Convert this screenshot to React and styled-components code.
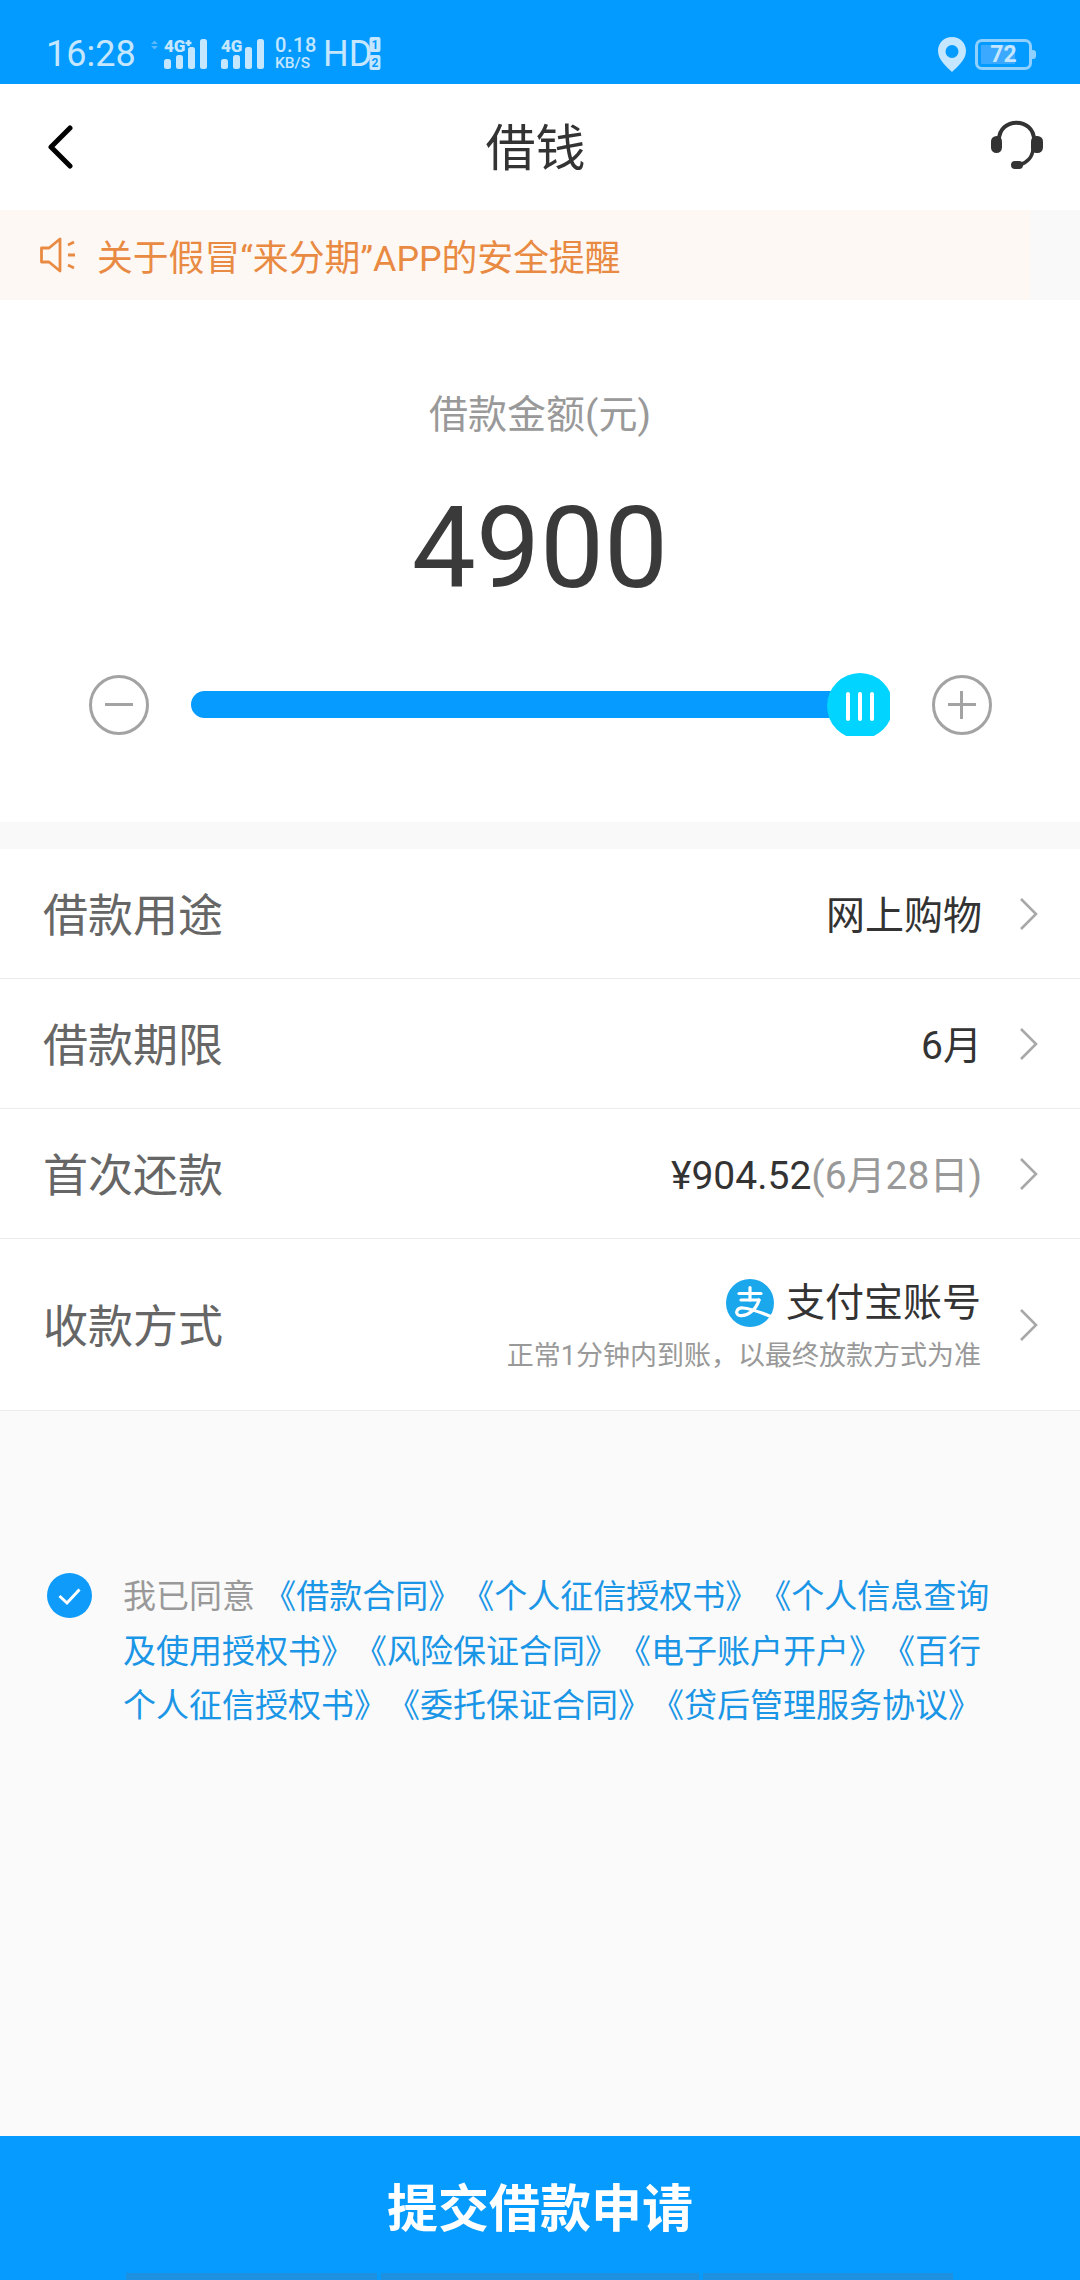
import React from 'react'
import styled, { createGlobalStyle } from 'styled-components'

const GlobalStyle = createGlobalStyle`
html, body {
  margin: 0;
  padding: 0;
  background: #fafafa;
}
* {
  box-sizing: border-box;
}
`
const Page = styled.div`
width: 1080px;
height: 2280px;
display: flex;
flex-direction: column;
overflow: hidden;
background: #fafafa;
font-family: Roboto, "Noto Sans CJK SC", sans-serif;
color: #333;
`
const StatusBar = styled.div`
height: 84px;
flex-shrink: 0;
display: flex;
align-items: center;
padding: 24px 45px 0 46px;
background: #039bff;
color: #c4e6ff;
`
const Time = styled.span`
width: 104px;
font-size: 36px;
line-height: 42px;
`
const StatusIcon = styled.svg`
display: block;
flex-shrink: 0;
margin-right: ${p => p.$gap || 0}px;
`
const Speed = styled.div`
width: 48px;
display: flex;
flex-direction: column;
font-weight: 500;
line-height: 16px;
`
const SpeedValue = styled.span`
font-size: 20px;
letter-spacing: 0.6px;
`
const SpeedUnit = styled.span`
font-size: 15.5px;
margin-top: 2px;
`
const Hd = styled.span`
font-size: 36px;
line-height: 42px;
width: 46px;
`
const Spacer = styled.div`
flex: 1;
`
const Battery = styled.div`
position: relative;
width: 57px;
height: 31px;
margin-right: 3px;
border: 3px solid #8fd0ff;
border-radius: 7px;
display: flex;
align-items: center;
justify-content: center;
font-size: 23px;
font-weight: 700;
background: linear-gradient(90deg, #3aa9ff 72%, transparent 72%);
background-clip: content-box;
padding: 3px;

&::after {
  content: '';
  position: absolute;
  right: -7px;
  top: 8px;
  width: 4px;
  height: 9px;
  border-radius: 0 3px 3px 0;
  background: #8fd0ff;
}
`
const NavBar = styled.div`
height: 126px;
flex-shrink: 0;
display: grid;
grid-template-columns: 1fr auto 1fr;
align-items: center;
padding: 0 37px 0 47px;
background: #fff;
`
const Title = styled.h1`
margin: 3px 19px 0 0;
font-size: 50px;
font-weight: 400;
line-height: 60px;
color: #333;
`
const HeadsetWrap = styled.div`
justify-self: end;
`
const Notice = styled.div`
height: 90px;
flex-shrink: 0;
display: flex;
align-items: center;
padding-left: 40px;
background: #fef8f4;
color: #e98a43;
font-size: 35.8px;
`
const NoticeText = styled.span`
margin-left: 21px;
`
const NoticeEnd = styled.div`
margin-left: auto;
width: 50px;
height: 100%;
background: #f9f9f9;
`
const AmountSection = styled.section`
height: 522px;
flex-shrink: 0;
display: flex;
flex-direction: column;
align-items: center;
padding-top: 91px;
background: #fff;
`
const AmountLabel = styled.div`
font-size: 39px;
line-height: 48px;
color: #999;
`
const Amount = styled.div`
margin-top: 44px;
font-size: 114px;
line-height: 130px;
color: #3a3a3a;
`
const SliderRow = styled.div`
margin-top: 60px;
width: 100%;
display: flex;
align-items: center;
padding-left: 89px;
`
const RoundButton = styled.div`
position: relative;
width: 60px;
height: 60px;
flex-shrink: 0;
border: 3px solid #a3a3a3;
border-radius: 50%;

&::before {
  content: '';
  position: absolute;
  left: 13px;
  right: 13px;
  top: 25px;
  height: 3px;
  background: #a3a3a3;
}

&::after {
  content: '';
  display: ${p => (p.$plus ? 'block' : 'none')};
  position: absolute;
  top: 13px;
  bottom: 13px;
  left: 25px;
  width: 3px;
  background: #a3a3a3;
}
`
const Track = styled.div`
position: relative;
width: 699px;
height: 63px;
margin: 0 42px;
display: flex;
align-items: center;
`
const TrackFill = styled.div`
width: 641px;
height: 27px;
border-radius: 14px 0 0 14px;
background: #059bff;
`
const Thumb = styled.div`
position: absolute;
right: 0;
top: 0;
width: 63px;
height: 63px;
overflow: hidden;
`
const ThumbFace = styled.div`
width: 66px;
height: 66px;
border-radius: 50%;
background: #00d4ff;
display: flex;
align-items: center;
justify-content: center;
gap: 8px;
`
const ThumbLine = styled.span`
width: 4px;
height: 29px;
border-radius: 2px;
background: #fff;
`
const Gap = styled.div`
height: 27px;
flex-shrink: 0;
background: #f9f9f9;
`
const Row = styled.div`
height: ${p => p.$height || 130}px;
flex-shrink: 0;
display: flex;
align-items: center;
padding: 0 41px 3px 43px;
background: #fff;
border-bottom: 1px solid #ececec;
`
const RowLabel = styled.span`
font-size: 45px;
color: #666;
`
const RowValue = styled.span`
margin-left: auto;
margin-right: -2px;
font-size: 39px;
color: #333;
`
const Muted = styled.span`
color: #999;
`
const RowChevron = styled.svg`
display: block;
flex-shrink: 0;
margin: 3px 0 0 39px;
`
const PayColumn = styled.div`
margin: 5px -1px 0 auto;
display: flex;
flex-direction: column;
align-items: flex-end;
`
const PayMethod = styled.div`
display: flex;
align-items: center;
gap: 12px;
font-size: 39px;
line-height: 50px;
color: #333;
`
const PayHint = styled.div`
margin-top: 10px;
font-size: 27px;
line-height: 36px;
color: #999;
`
const Agreement = styled.div`
padding: 159px 0 0 47px;
display: flex;
`
const CheckMark = styled.svg`
display: block;
flex-shrink: 0;
margin: 3px 31px 0 0;
`
const AgreementText = styled.div`
font-size: 33px;
line-height: 54.5px;
color: #1b96e6;
text-spacing-trim: space-all;
`
const AgreementLine = styled.div`
white-space: nowrap;
`
const Footer = styled.div`
position: relative;
margin-top: auto;
height: 144px;
flex-shrink: 0;
display: flex;
align-items: center;
justify-content: center;
padding-bottom: 6px;
background: #069cff;
color: #fff;
font-size: 51px;
font-weight: 700;
`
const NavStrip = styled.div`
position: absolute;
left: 126px;
bottom: 0;
display: flex;
gap: 4px;
`
const NavStripPart = styled.span`
width: ${p => p.$width}px;
height: 7px;
background: #1e90e0;
`

function Signal ({ plus, arrows }) {
  const x = arrows ? 14 : 0
  const w = arrows ? 60 : 44
  const tops = [20, 16, 8, 0]
  return (
    <StatusIcon width={w} height='41' viewBox={`0 -5 ${w} 41`} $gap={arrows ? 11 : 10}>
      {arrows && <path d='M1 5 L4.5 1.5 L8 5 Z M1 7 L4.5 10.5 L8 7 Z' fill='#5cb8ff' />}
      <text x={x} y='12.5' fontFamily='Roboto' fontSize='17' fontWeight='900' fill='#c4e6ff'>4G</text>
      {plus && <path d={`M${x + 21.5} 4 h6 M${x + 24.5} 1 v6`} stroke='#c4e6ff' strokeWidth='2.4' />}
      {tops.map((top, i) => (
        <rect key={i} x={x + i * 12} y={top} width='7' height={30 - top} rx='2.5' fill='#c4e6ff' />
      ))}
    </StatusIcon>
  )
}

function Sim () {
  return (
    <StatusIcon width='12' height='34' viewBox='0 0 12 34'>
      <rect x='0.5' y='0' width='11' height='15' rx='2' fill='#c4e6ff' />
      <text x='6' y='12' textAnchor='middle' fontFamily='Roboto' fontSize='12' fontWeight='700' fill='#039bff'>1</text>
      <rect x='0.5' y='18' width='11' height='15' rx='2' fill='#c4e6ff' />
      <text x='6' y='30' textAnchor='middle' fontFamily='Roboto' fontSize='12' fontWeight='700' fill='#039bff'>2</text>
    </StatusIcon>
  )
}

function Chevron () {
  return (
    <RowChevron width='20' height='34' viewBox='0 0 20 34' fill='none'>
      <path d='M2 2 L17 17 L2 32' stroke='#a8a8a8' strokeWidth='2.6' />
    </RowChevron>
  )
}

function AlipayLogo () {
  return (
    <svg width='48' height='48' viewBox='0 0 48 48' fill='none'>
      <circle cx='24' cy='24' r='24' fill='#1aa7ec' />
      <g stroke='#fff' strokeWidth='3.2' strokeLinecap='round'>
        <path d='M13 14.5 H35' />
        <path d='M24 8.5 V21' />
        <path d='M15 21 H33' />
        <path d='M33 21 C30 31 21 38 13.5 36.5 C8.5 35 10.5 28.5 17 29 C24 29.5 34 33 46 38' />
      </g>
    </svg>
  )
}

function App () {
  return (
    <Page>
      <GlobalStyle />
      <StatusBar>
        <Time>16:28</Time>
        <Signal plus arrows />
        <Signal />
        <Speed>
          <SpeedValue>0.18</SpeedValue>
          <SpeedUnit>KB/S</SpeedUnit>
        </Speed>
        <Hd>HD</Hd>
        <Sim />
        <Spacer />
        <StatusIcon width='28' height='35' viewBox='0 0 28 35' $gap={9}>
          <path
            fillRule='evenodd'
            d='M14 0 C6 0 0 6 0 14 C0 23 9 30 14 35 C19 30 28 23 28 14 C28 6 22 0 14 0 Z M14 8 A6.5 6.5 0 1 1 14 21 A6.5 6.5 0 1 1 14 8 Z'
            fill='#c4e6ff'
          />
        </StatusIcon>
        <Battery>72</Battery>
      </StatusBar>

      <NavBar>
        <svg width='26' height='44' viewBox='0 0 26 44' fill='none'>
          <path d='M23 3 L4 22 L23 41' stroke='#000' strokeWidth='5' strokeLinecap='round' strokeLinejoin='round' />
        </svg>
        <Title>借钱</Title>
        <HeadsetWrap>
          <svg width='52' height='50' viewBox='0 0 52 50' fill='none'>
            <path d='M8 20 C8 -3 43 -3 43 20' stroke='#333' strokeWidth='4' />
            <path d='M42 28 C42 37 36 43 28 45' stroke='#333' strokeWidth='3.5' />
            <rect x='0' y='16' width='11' height='17' rx='5.5' fill='#333' />
            <rect x='40' y='16' width='12' height='17' rx='5.5' fill='#333' />
            <rect x='20' y='41' width='12' height='8' rx='4' fill='#333' />
          </svg>
        </HeadsetWrap>
      </NavBar>

      <Notice>
        <svg width='36' height='36' viewBox='0 0 36 36' fill='none'>
          <path d='M1.5 11 H9 L20 2 V34 L9 25 H1.5 Z' stroke='#e98a43' strokeWidth='2.8' strokeLinejoin='round' />
          <path d='M28 8 L34 5 M28 18 H35 M28 28 L34 31' stroke='#e98a43' strokeWidth='2.8' />
        </svg>
        <NoticeText>关于假冒“来分期”APP的安全提醒</NoticeText>
        <NoticeEnd />
      </Notice>

      <AmountSection>
        <AmountLabel>借款金额(元)</AmountLabel>
        <Amount>4900</Amount>
        <SliderRow>
          <RoundButton />
          <Track>
            <TrackFill />
            <Thumb>
              <ThumbFace>
                <ThumbLine />
                <ThumbLine />
                <ThumbLine />
              </ThumbFace>
            </Thumb>
          </Track>
          <RoundButton $plus />
        </SliderRow>
      </AmountSection>

      <Gap />

      <Row>
        <RowLabel>借款用途</RowLabel>
        <RowValue>网上购物</RowValue>
        <Chevron />
      </Row>
      <Row>
        <RowLabel>借款期限</RowLabel>
        <RowValue>6月</RowValue>
        <Chevron />
      </Row>
      <Row>
        <RowLabel>首次还款</RowLabel>
        <RowValue>¥904.52<Muted>(6月28日)</Muted></RowValue>
        <Chevron />
      </Row>
      <Row $height={172}>
        <RowLabel>收款方式</RowLabel>
        <PayColumn>
          <PayMethod>
            <AlipayLogo />
            支付宝账号
          </PayMethod>
          <PayHint>正常1分钟内到账，以最终放款方式为准</PayHint>
        </PayColumn>
        <Chevron />
      </Row>

      <Agreement>
        <CheckMark width='45' height='45' viewBox='0 0 45 45' fill='none'>
          <circle cx='22.5' cy='22.5' r='22.5' fill='#0f9bfa' />
          <path d='M12.5 23 L20 30 L32.5 16.5' stroke='#fff' strokeWidth='3' />
        </CheckMark>
        <AgreementText>
          <AgreementLine><Muted>我已同意</Muted> 《借款合同》《个人征信授权书》《个人信息查询</AgreementLine>
          <AgreementLine>及使用授权书》《风险保证合同》《电子账户开户》《百行</AgreementLine>
          <AgreementLine>个人征信授权书》《委托保证合同》《贷后管理服务协议》</AgreementLine>
        </AgreementText>
      </Agreement>

      <Footer>
        提交借款申请
        <NavStrip>
          <NavStripPart $width={251} />
          <NavStripPart $width={318} />
          <NavStripPart $width={250} />
        </NavStrip>
      </Footer>
    </Page>
  )
}
export default App
